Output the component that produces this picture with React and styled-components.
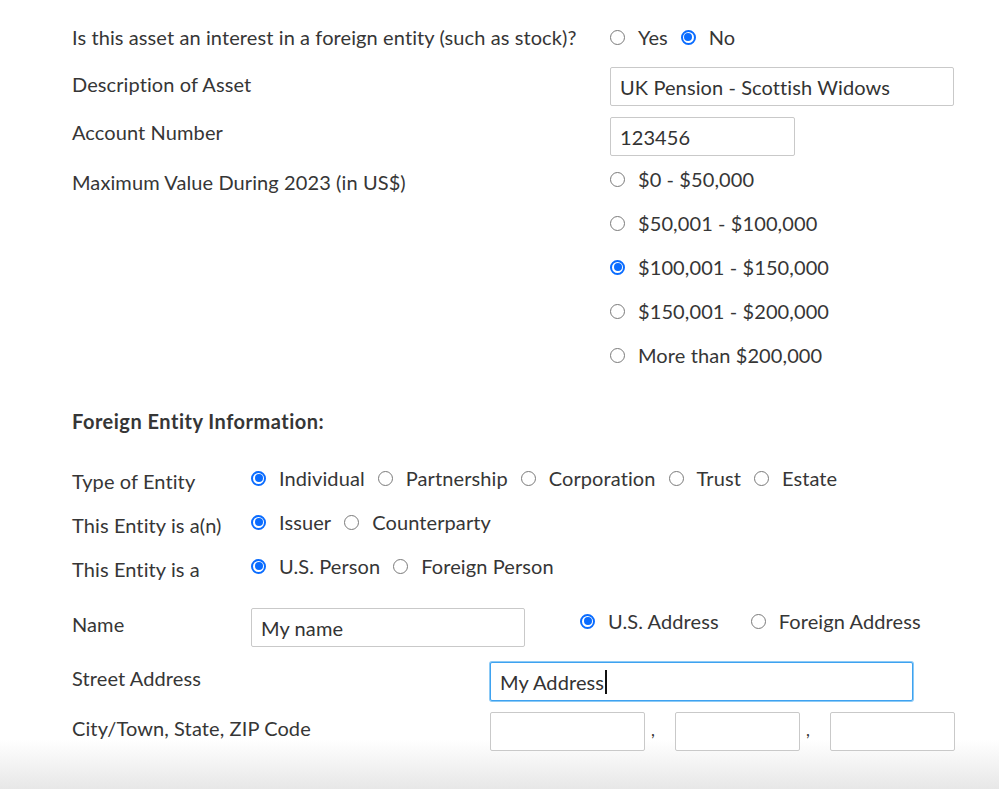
import React from 'react';
import styled, { createGlobalStyle } from 'styled-components';

const GlobalStyle = createGlobalStyle`
  html, body {
    margin: 0;
    padding: 0;
  }
  body {
    min-height: 789px;
    background: linear-gradient(to bottom, #fff 0, #fff 740px, #e7e7e7 789px);
    font-family: Lato, "Open Sans", sans-serif;
    color: #363636;
  }
`;

const Page = styled.div`
  padding: 12px 0 0 72px;
  font-size: 20px;
  letter-spacing: 0.1px;
`;

const AssetGrid = styled.div`
  display: grid;
  grid-template-columns: 538px auto;
  align-items: start;
`;

const Label = styled.div`
  line-height: 24px;
  white-space: nowrap;
  padding-top: ${p => p.$top || 0}px;
`;

const RadioGroup = styled.div`
  display: flex;
  align-items: center;
  gap: ${p => p.$gap || 13}px;
  height: ${p => p.$height || 44}px;
  margin-top: ${p => p.$top || 0}px;
`;

const RadioList = styled.div`
  display: flex;
  flex-direction: column;
`;

const Option = styled.label`
  display: flex;
  align-items: center;
  gap: 13px;
  height: 44px;
  white-space: nowrap;
`;

const Radio = styled.span`
  width: 15px;
  height: 15px;
  box-sizing: border-box;
  border-radius: 50%;
  border: 1px solid #7a7a7a;
  background: #fff;
  flex-shrink: 0;
  position: relative;
  ${p => p.$checked && `
    border: 2px solid #0a6cff;
    &::after {
      content: '';
      position: absolute;
      inset: 1.5px;
      border-radius: 50%;
      background: #0a6cff;
    }
  `}
`;

const TextBox = styled.div`
  box-sizing: border-box;
  width: ${p => p.$width}px;
  height: 39px;
  margin-top: ${p => p.$top || 0}px;
  border: 1px solid ${p => (p.$focused ? '#3ea2f0' : '#c9c9c9')};
  box-shadow: ${p => (p.$focused ? '0 0 0 1px #8ccaf6' : 'none')};
  border-radius: 2px;
  background: #fff;
  padding: 0 9px;
  display: flex;
  align-items: center;
  font-size: 20px;
  color: #333;
  flex-shrink: 0;
`;

const Caret = styled.span`
  display: inline-block;
  width: 1.5px;
  height: 24px;
  background: #111;
  margin-left: 1px;
`;

const Heading = styled.div`
  font-weight: 700;
  margin: 32px 0 23px;
  line-height: 24px;
  letter-spacing: 0.5px;
`;

const EntityRow = styled.div`
  display: flex;
  align-items: center;
  height: 44px;
`;

const FieldRow = styled.div`
  display: flex;
  align-items: flex-start;
  height: ${p => p.$height}px;
`;

const EntityLabel = styled.div`
  width: 179px;
  flex-shrink: 0;
  white-space: nowrap;
  line-height: 24px;
  padding-top: ${p => (p.$top == null ? 5 : p.$top)}px;
`;

const Spacer = styled.div`
  width: ${p => p.$width}px;
  flex-shrink: 0;
`;

const Comma = styled.span`
  width: 30px;
  box-sizing: border-box;
  padding: 18px 0 0 6px;
  font-size: 17px;
  line-height: 20px;
`;

const Choice = ({ checked, children }) => (
  <Option>
    <Radio $checked={checked} />
    {children}
  </Option>
);

const maxValues = [
  '$0 - $50,000',
  '$50,001 - $100,000',
  '$100,001 - $150,000',
  '$150,001 - $200,000',
  'More than $200,000',
];

export default function App() {
  return (
    <Page>
      <GlobalStyle />
      <AssetGrid>
        <Label $top={13}>Is this asset an interest in a foreign entity (such as stock)?</Label>
        <RadioGroup $height={50}>
          <Choice>Yes</Choice>
          <Choice checked>No</Choice>
        </RadioGroup>

        <Label $top={10}>Description of Asset</Label>
        <TextBox $width={344} $top={5}>UK Pension - Scottish Widows</TextBox>

        <Label $top={14}>Account Number</Label>
        <TextBox $width={185} $top={11}>123456</TextBox>

        <Label $top={14}>Maximum Value During 2023 (in US$)</Label>
        <RadioList style={{ marginTop: 1 }}>
          {maxValues.map((v, i) => (
            <Choice key={v} checked={i === 2}>{v}</Choice>
          ))}
        </RadioList>
      </AssetGrid>

      <Heading>Foreign Entity Information:</Heading>

      <EntityRow>
        <EntityLabel>Type of Entity</EntityLabel>
        <RadioGroup>
          <Choice checked>Individual</Choice>
          <Choice>Partnership</Choice>
          <Choice>Corporation</Choice>
          <Choice>Trust</Choice>
          <Choice>Estate</Choice>
        </RadioGroup>
      </EntityRow>
      <EntityRow>
        <EntityLabel>This Entity is a(n)</EntityLabel>
        <RadioGroup>
          <Choice checked>Issuer</Choice>
          <Choice>Counterparty</Choice>
        </RadioGroup>
      </EntityRow>
      <EntityRow>
        <EntityLabel>This Entity is a</EntityLabel>
        <RadioGroup>
          <Choice checked>U.S. Person</Choice>
          <Choice>Foreign Person</Choice>
        </RadioGroup>
      </EntityRow>

      <FieldRow $height={64}>
        <EntityLabel $top={24}>Name</EntityLabel>
        <TextBox $width={274} $top={20}>My name</TextBox>
        <Spacer $width={55} />
        <RadioGroup $gap={32} $top={11}>
          <Choice checked>U.S. Address</Choice>
          <Choice>Foreign Address</Choice>
        </RadioGroup>
      </FieldRow>
      <FieldRow $height={50}>
        <EntityLabel $top={14}>Street Address</EntityLabel>
        <Spacer $width={239} />
        <TextBox $width={423} $top={10} $focused>
          My Address<Caret />
        </TextBox>
      </FieldRow>
      <FieldRow $height={50}>
        <EntityLabel $top={14}>City/Town, State, ZIP Code</EntityLabel>
        <Spacer $width={239} />
        <TextBox $width={155} $top={10} />
        <Comma>,</Comma>
        <TextBox $width={125} $top={10} />
        <Comma>,</Comma>
        <TextBox $width={125} $top={10} />
      </FieldRow>
    </Page>
  );
}
